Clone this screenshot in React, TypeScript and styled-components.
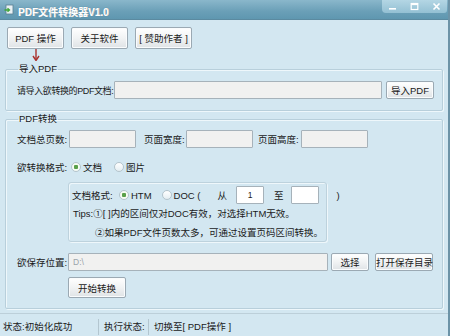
import styled, {createGlobalStyle} from "styled-components";

const GlobalStyle = createGlobalStyle`
  body {
    margin: 0;
    font-family: "Liberation Sans", "Noto Sans CJK SC", sans-serif;
    font-size: 9.5px;
    color: #1a1a1a;
  }
`;

const Window = styled.div`
  width: 450px;
  height: 336px;
  box-sizing: border-box;
  display: flex;
  flex-direction: column;
  background: #d3e7f1;
  border-right: 2px solid #6c93a7;
  overflow: hidden;
`;

const TitleBar = styled.div`
  height: 20px;
  flex-shrink: 0;
  display: flex;
  align-items: flex-start;
  background: linear-gradient(#8ab7cb, #6a9fb7 60%, #5f97b0);
  border-bottom: 1px solid #5b8aa0;
  box-sizing: border-box;
`;

const TitleIcon = styled.svg`
  margin: 4px 3px 0 4px;
  flex-shrink: 0;
`;

const TitleText = styled.span`
  margin-top: 4px;
  color: #fff;
  font-weight: bold;
  font-size: 10px;
  text-shadow: 0 0 1px #3d6a80, 0.5px 0 0 #fff;
`;

const Controls = styled.div`
  margin-left: auto;
  width: 65px;
  height: 13px;
  display: flex;
  align-items: center;
  justify-content: space-around;
  background: linear-gradient(#b4d6e4, #93c0d3);
  border-bottom-left-radius: 4px;
  border-bottom-right-radius: 3px;
  margin-right: 1px;
  color: #fff;
`;

const Toolbar = styled.div`
  display: flex;
  gap: 7px;
  padding: 7px 0 0 7px;
`;

const Button = styled.button<{$w: number; $h?: number}>`
  width: ${p => p.$w}px;
  height: ${p => p.$h ?? 18}px;
  padding: 0;
  flex-shrink: 0;
  white-space: nowrap;
  font-family: inherit;
  font-size: 9.5px;
  color: #1a1a1a;
  background: linear-gradient(#ffffff, #f1f3f4 50%, #dfe3e6);
  border: 1px solid #9ba9b3;
  border-radius: 2px;
  box-shadow: inset 0 0 0 1px #fafcfd;
`;

const ArrowRow = styled.div`
  height: 13px;
  padding-left: 32px;
`;

const Group = styled.fieldset<{$pt: number; $pb: number}>`
  margin: 0 5px;
  padding: ${p => p.$pt}px 10px ${p => p.$pb}px 11px;
  border: 1px solid #b8cfdb;
  border-radius: 2px;
  box-shadow: inset 1px 1px 0 #eef7fb, 1px 1px 0 #eef7fb;
  min-width: 0;
`;

const Legend = styled.legend`
  padding: 0 1px;
  margin-left: 1px;
  line-height: 14px;
`;

const Row = styled.div<{$mt?: number}>`
  display: flex;
  align-items: center;
  height: 20px;
  margin-top: ${p => p.$mt ?? 0}px;
`;

const Label = styled.span<{$w?: number; $ml?: number; $tight?: boolean}>`
  flex-shrink: 0;
  white-space: nowrap;
  width: ${p => (p.$w ? `${p.$w}px` : "auto")};
  margin-left: ${p => p.$ml ?? 0}px;
  font-size: ${p => (p.$tight ? "9px" : "inherit")};
  letter-spacing: ${p => (p.$tight ? "-0.4px" : "normal")};
`;

const Field = styled.input<{$w: number; $white?: boolean; $ml?: number}>`
  width: ${p => p.$w}px;
  height: 18px;
  box-sizing: border-box;
  flex-shrink: 0;
  margin: 0 0 0 ${p => p.$ml ?? 0}px;
  padding: 0 4px;
  font-family: inherit;
  font-size: 8.5px;
  color: #9aa4aa;
  background: ${p => (p.$white ? "#ffffff" : "#f1f1f0")};
  border: 1px solid #a6b2ba;
  border-radius: 1px;
  outline: none;
`;

const Radio = styled.span<{$checked?: boolean; $ml: number}>`
  width: 8px;
  height: 8px;
  margin: 0 2px 0 ${p => p.$ml}px;
  flex-shrink: 0;
  border-radius: 50%;
  border: 1px solid #b4c4cc;
  background: ${p =>
    p.$checked
      ? "radial-gradient(circle, #5aa04a 0 2px, #f6fbf4 2.5px)"
      : "linear-gradient(#ffffff, #e4eef2)"};
`;

const SubBox = styled.div`
  margin: 5px 0 0 51px;
  width: 259px;
  height: 60px;
  box-sizing: border-box;
  padding: 3px 0 0 3px;
  border: 1px solid #bdd2dd;
  border-radius: 3px;
  box-shadow: inset 1px 1px 0 #eef7fb, 1px 1px 0 #eef7fb;
`;

const SubRow = styled.div`
  display: flex;
  align-items: center;
  height: 18px;
`;

const Tips = styled.div<{$indent?: number}>`
  line-height: 19px;
  padding-left: ${p => p.$indent ?? 1}px;
  white-space: nowrap;
  font-size: 9.5px;
`;

const StartRow = styled.div`
  margin: 5px 0 0 51px;
`;

const StatusBar = styled.div`
  flex: 1;
  margin-top: 4px;
  display: flex;
  align-items: center;
  padding-top: 3px;
  border-top: 1px solid #bccfd9;
`;

const StatusCell = styled.div<{$w?: number}>`
  width: ${p => (p.$w ? `${p.$w}px` : "auto")};
  padding-left: ${p => (p.$w === 99 ? 3 : 5)}px;
  box-sizing: border-box;
  border-right: ${p => (p.$w ? "1px solid #b3c6d0" : "none")};
  height: 16px;
  line-height: 16px;
  white-space: nowrap;
`;

function DownArrow() {
  return (
    <svg width="8" height="12" viewBox="0 0 8 12">
      <line x1="4" y1="0" x2="4" y2="10" stroke="#a8302c" strokeWidth="1.4" />
      <path d="M1 7 L4 11.5 L7 7" fill="none" stroke="#a8302c" strokeWidth="1.4" />
    </svg>
  );
}

export default function App() {
  return (
    <Window>
      <GlobalStyle />
      <TitleBar>
        <TitleIcon width="11" height="11" viewBox="0 0 11 11">
          <rect x="2" y="1" width="7" height="9" fill="#e8f0f4" stroke="#5a7f92" strokeWidth="0.8" />
          <path d="M0.5 6 H5 M3.5 4.3 L5.5 6 L3.5 7.7" fill="none" stroke="#3fa63a" strokeWidth="1.3" />
        </TitleIcon>
        <TitleText>PDF文件转换器V1.0</TitleText>
        <Controls>
          <svg width="9" height="9" viewBox="0 0 9 9">
            <rect x="1" y="6" width="7" height="1.6" fill="#fff" />
          </svg>
          <svg width="9" height="9" viewBox="0 0 9 9">
            <rect x="1.2" y="1.5" width="6.6" height="6" fill="none" stroke="#fff" strokeWidth="1.2" />
            <rect x="1.2" y="1.5" width="6.6" height="1.6" fill="#fff" />
          </svg>
          <svg width="9" height="9" viewBox="0 0 9 9">
            <path d="M1.5 1.5 L7.5 7.5 M7.5 1.5 L1.5 7.5" stroke="#fff" strokeWidth="1.6" />
          </svg>
        </Controls>
      </TitleBar>

      <Toolbar>
        <Button $w={57} $h={22}>PDF 操作</Button>
        <Button $w={57} $h={22}>关于软件</Button>
        <Button $w={57} $h={22}>[ 赞助作者 ]</Button>
      </Toolbar>
      <ArrowRow>
        <DownArrow />
      </ArrowRow>

      <Group $pt={4} $pb={10}>
        <Legend>导入PDF</Legend>
        <Row>
          <Label $w={97} $tight>请导入欲转换的PDF文档:</Label>
          <Field $w={268} />
          <Button $w={48} style={{marginLeft: 4}}>导入PDF</Button>
        </Row>
      </Group>

      <Group $pt={3} $pb={10} style={{marginTop: 1}}>
        <Legend>PDF转换</Legend>
        <Row>
          <Label $w={52}>文档总页数:</Label>
          <Field $w={67} />
          <Label $w={42} $ml={8}>页面宽度:</Label>
          <Field $w={67} />
          <Label $w={43} $ml={5}>页面高度:</Label>
          <Field $w={67} />
        </Row>
        <Row $mt={8}>
          <Label $w={54}>欲转换格式:</Label>
          <Radio $checked $ml={0} />
          <Label>文档</Label>
          <Radio $ml={12} />
          <Label>图片</Label>
        </Row>
        <SubBox>
          <SubRow>
            <Label $w={46}>文档格式:</Label>
            <Radio $checked $ml={1} />
            <Label>HTM</Label>
            <Radio $ml={10} />
            <Label>DOC (</Label>
            <Label $ml={17}>从</Label>
            <Field $w={28} $white $ml={9} value="1" readOnly style={{color: "#222", textAlign: "center"}} />
            <Label $ml={10}>至</Label>
            <Field $w={28} $white $ml={7} />
            <Label $ml={18}>)</Label>
          </SubRow>
          <Tips>Tips:①[ ]内的区间仅对DOC有效，对选择HTM无效。</Tips>
          <Tips $indent={23}>②如果PDF文件页数太多，可通过设置页码区间转换。</Tips>
        </SubBox>
        <Row $mt={10}>
          <Label $w={51}>欲保存位置:</Label>
          <Field $w={260} defaultValue="D:\" />
          <Button $w={38} style={{marginLeft: 3}}>选择</Button>
          <Button $w={58} style={{marginLeft: 6}}>打开保存目录</Button>
        </Row>
        <StartRow>
          <Button $w={58} $h={21}>开始转换</Button>
        </StartRow>
      </Group>

      <StatusBar>
        <StatusCell $w={99}>状态:初始化成功</StatusCell>
        <StatusCell $w={50}>执行状态:</StatusCell>
        <StatusCell>切换至[ PDF操作 ]</StatusCell>
      </StatusBar>
    </Window>
  );
}
